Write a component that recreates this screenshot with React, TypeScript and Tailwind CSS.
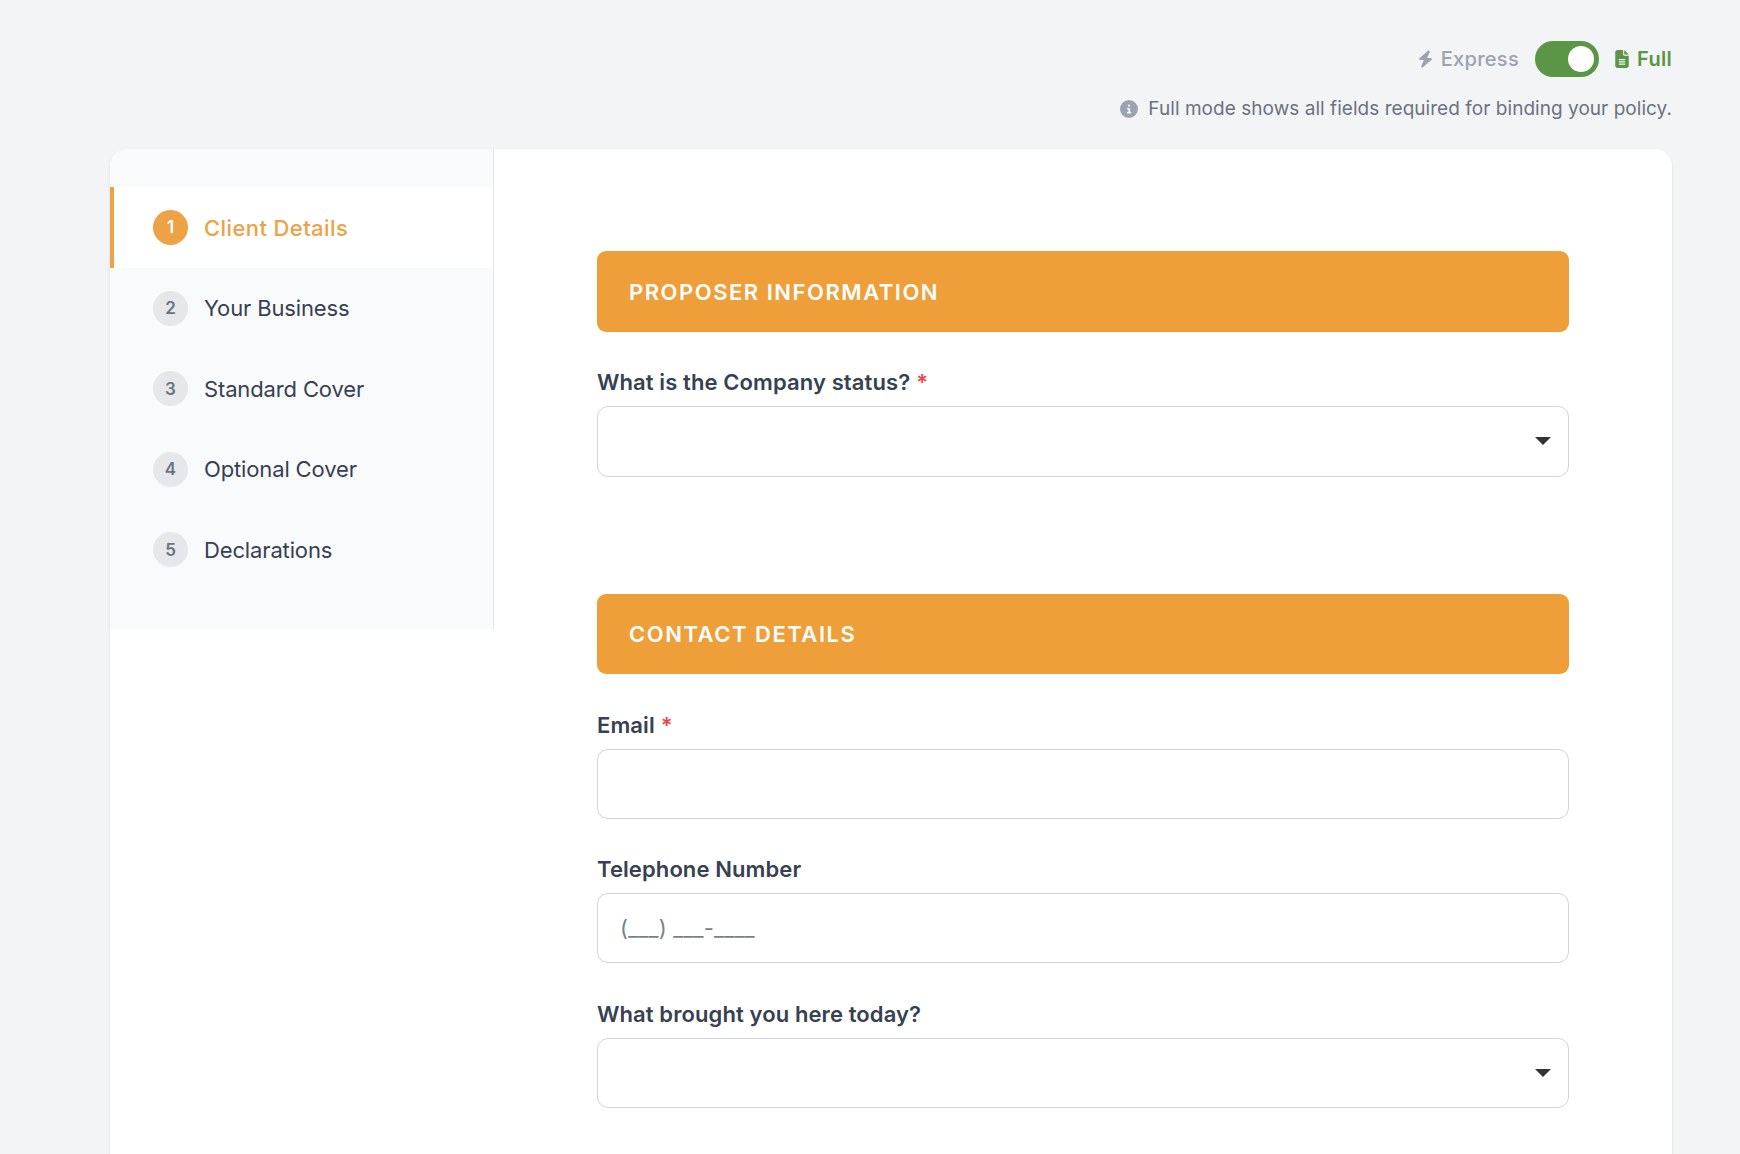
import React from 'react'
import { FaBolt, FaFileLines, FaCircleInfo } from 'react-icons/fa6'

const steps = ['Client Details', 'Your Business', 'Standard Cover', 'Optional Cover', 'Declarations']

function Caret() {
    return (
        <svg viewBox="0 0 16 8" className="absolute right-[18px] top-[31px] w-[16px] h-[8px] pointer-events-none">
            <path d="M0 0h16L8 8z" fill="#333333" />
        </svg>
    )
}

function SectionHeader({ title, className }: { title: string; className: string }) {
    return (
        <div className={`flex items-center pl-[32px] pt-[1px] rounded-[9px] bg-[#ee9f3a] text-white text-[22px] font-semibold tracking-[1.52px] ${className}`}>
            {title}
        </div>
    )
}

function Label({ text, required }: { text: string; required?: boolean }) {
    return (
        <label className="block h-[49px] pt-[11px] text-[22px] leading-[28px] font-semibold tracking-[0.1px] text-[#374151]">
            {text}
            {required && <span className="ml-[6px] text-[#ef4444]">*</span>}
        </label>
    )
}

function SelectField({ className }: { className: string }) {
    return (
        <div className={`relative ${className}`}>
            <select className="block w-full h-full appearance-none bg-white border border-[#d1d5db] rounded-[11px]" />
            <Caret />
        </div>
    )
}

export default function App() {
    return (
        <div className="h-[1154px] overflow-hidden bg-[#f3f4f6] font-[Inter,sans-serif]">
            <div className="pr-[68px] pt-[41px]">
                <div className="flex items-center justify-end h-[36px]">
                    <FaBolt className="h-[18px] w-[15px] text-[#9ca3af]" />
                    <span className="ml-[8px] text-[20px] font-medium text-[#9ca3af] tracking-[0.3px]">Express</span>
                    <div className="ml-[16px] mr-[1px] w-[64px] h-[36px] rounded-full bg-[#5a9645] flex items-center justify-end pr-[5px]">
                        <div className="w-[26px] h-[26px] rounded-full bg-white" />
                    </div>
                    <FaFileLines className="ml-[15px] h-[18px] w-[14px] text-[#5a9645]" />
                    <span className="ml-[8px] text-[20px] font-semibold tracking-[0.3px] text-[#5a9645]">Full</span>
                </div>
                <div className="flex items-center justify-end mt-[17px] h-[30px] text-[#6b7280] text-[19px] tracking-[0.04px]">
                    <FaCircleInfo className="w-[18px] h-[18px] mr-[10px] text-[#9ca3af]" />
                    <span>Full mode shows all fields required for binding your policy.</span>
                </div>
            </div>

            <div className="ml-[110px] mr-[68px] mt-[25px] flex items-start bg-white rounded-t-[17px] shadow-[0_1px_3px_rgba(0,0,0,0.1)] h-[1100px] overflow-hidden">
                <aside className="w-[384px] h-[480px] pt-[38px] bg-[#f9fafb] border-r border-[#e5e7eb] shrink-0">
                    {steps.map((step, i) => (
                        <div
                            key={step}
                            className={i === 0
                                ? 'h-[81px] flex items-center pl-[39px] bg-white border-l-4 border-[#eca245]'
                                : 'h-[80.5px] flex items-center pl-[43px]'}
                        >
                            <span className={i === 0
                                ? 'w-[35px] h-[35px] pt-[1px] rounded-full flex items-center justify-center bg-[#eca245] text-white text-[17px] font-semibold'
                                : 'w-[35px] h-[35px] pt-[1px] rounded-full flex items-center justify-center bg-[#e5e7eb] text-[#6b7280] text-[17px] font-semibold'}
                            >
                                {i + 1}
                            </span>
                            <span className={i === 0
                                ? 'ml-[16px] pt-[1px] text-[22px] font-medium tracking-[0.4px] text-[#eca245]'
                                : 'ml-[16px] pt-[1px] text-[22px] tracking-[-0.14px] text-[#374151]'}
                            >
                                {step}
                            </span>
                        </div>
                    ))}
                </aside>

                <main className="flex-1 pt-[102px] px-[103px]">
                    <SectionHeader title="PROPOSER INFORMATION" className="h-[81px]" />
                    <div className="mt-[25px]">
                        <Label text="What is the Company status?" required />
                        <SelectField className="h-[71px]" />
                    </div>

                    <div className="mt-[117px]">
                        <SectionHeader title="CONTACT DETAILS" className="h-[80px]" />
                    </div>
                    <div className="mt-[26px]">
                        <Label text="Email" required />
                        <input className="block w-full h-[70px] bg-white border border-[#d1d5db] rounded-[11px]" />
                    </div>
                    <div className="mt-[25px]">
                        <Label text="Telephone Number" />
                        <input
                            placeholder="(___) ___-____"
                            className="block w-full h-[70px] pl-[22px] pr-[24px] bg-white border border-[#d1d5db] rounded-[11px] text-[22px] tracking-[0.15px] placeholder:text-[#7b8088]"
                        />
                    </div>
                    <div className="mt-[26px]">
                        <Label text="What brought you here today?" />
                        <SelectField className="h-[70px]" />
                    </div>
                </main>
            </div>
        </div>
    )
}
